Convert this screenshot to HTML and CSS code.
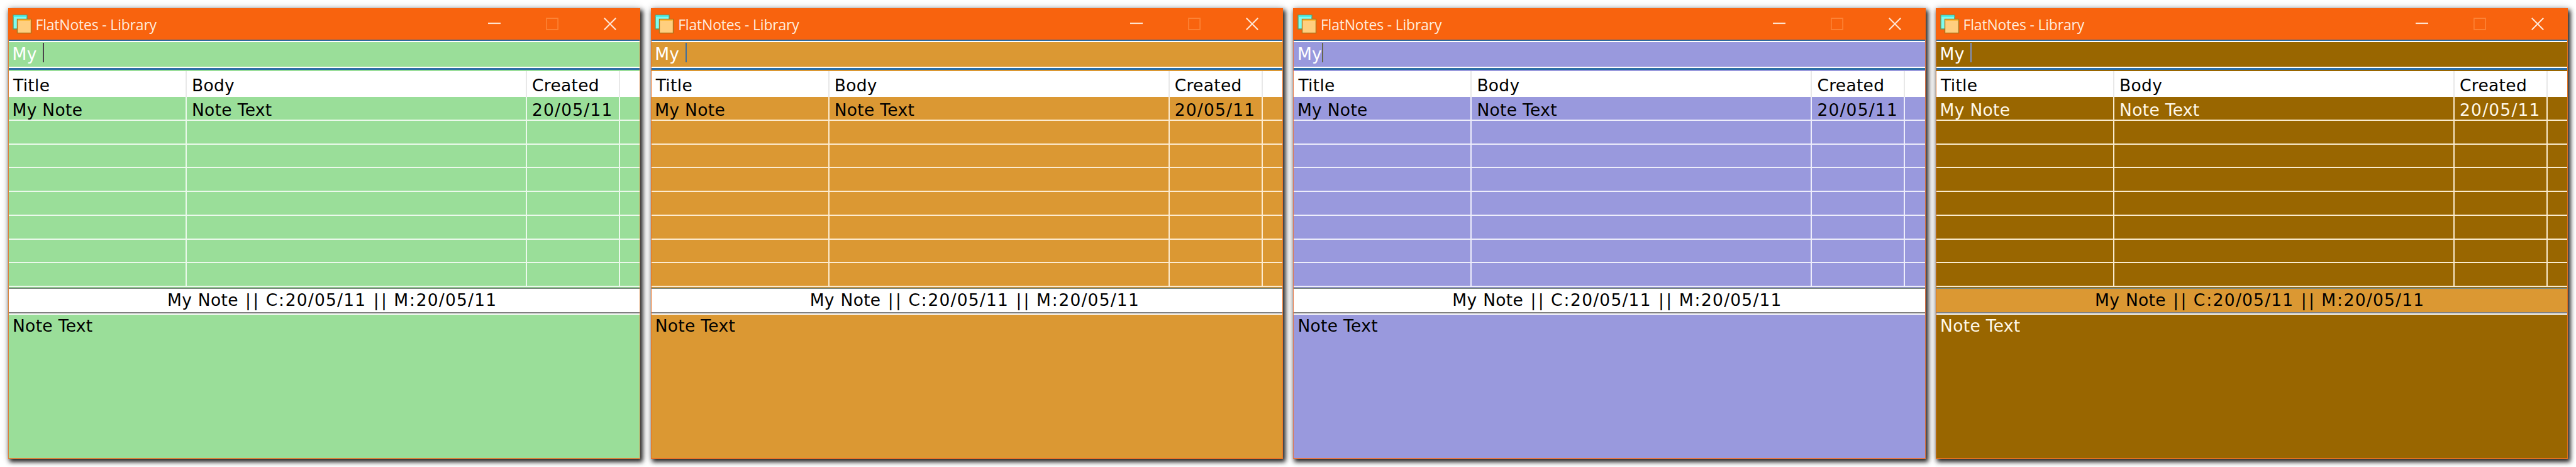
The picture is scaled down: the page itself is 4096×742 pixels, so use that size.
FILE: index.html
```html
<!DOCTYPE html>
<html lang="en">
<head>
<meta charset="utf-8">
<title>FlatNotes - Library</title>
<link rel="stylesheet" href="styles.css">
</head>
<body>
<svg class="defs" width="0" height="0">
  <symbol id="app" viewBox="0 0 31 31">
    <rect x="1" y="1" width="22" height="22" fill="#7ffcf0" stroke="#5e9a62" stroke-width="1.4"/>
    <path d="M1.7 2.5h20.6" stroke="#46e9e6" stroke-width="2.5"/>
    <rect x="7.5" y="7.5" width="22" height="22" fill="#ffcf7f" stroke="#a8741c" stroke-width="1.4"/>
    <path d="M8.2 9h20.6" stroke="#fdbb3c" stroke-width="2"/>
  </symbol>
  <symbol id="min" viewBox="0 0 20 20"><path d="M0 9h20" stroke="#ffe3cf" stroke-width="2.2"/></symbol>
  <symbol id="max" viewBox="0 0 20 20"><path d="M.9 1.1h18.2v17.8H.9z" fill="none" stroke="#fc8437" stroke-width="1.6"/></symbol>
  <symbol id="close" viewBox="0 0 20 20"><path d="M.8.8l18.4 18.4M19.2.8L.8 19.2" stroke="#ffeadb" stroke-width="2"/></symbol>
</svg>
<main class="desk" id="desk"></main>
<template id="tpl">
  <section class="window">
    <header class="titlebar">
      <svg class="app-icon"><use href="#app"/></svg>
      <span class="caption">FlatNotes - Library</span>
      <svg class="control"><use href="#min"/></svg>
      <svg class="control"><use href="#max"/></svg>
      <svg class="control"><use href="#close"/></svg>
    </header>
    <div class="search"><span>My</span><i class="caret"></i></div>
    <div class="rule"></div>
    <div class="row head"><div>Title</div><div>Body</div><div>Created</div><div></div></div>
    <div class="rows">
      <div class="row"><div>My Note</div><div>Note Text</div><div class="date">20/05/11</div><div></div></div>
      <div class="row"><div></div><div></div><div></div><div></div></div>
      <div class="row"><div></div><div></div><div></div><div></div></div>
      <div class="row"><div></div><div></div><div></div><div></div></div>
      <div class="row"><div></div><div></div><div></div><div></div></div>
      <div class="row"><div></div><div></div><div></div><div></div></div>
      <div class="row"><div></div><div></div><div></div><div></div></div>
      <div class="row"><div></div><div></div><div></div><div></div></div>
    </div>
    <div class="status"><span>My Note <b>||</b> C<b>:</b><span class="date">20/05/11</span> <b>||</b> M<b>:</b><span class="date">20/05/11</span></span></div>
    <div class="note">Note Text</div>
  </section>
</template>
<script src="app.js"></script>
</body>
</html>
```

FILE: styles.css
```css
* { box-sizing: border-box; }
body {
  margin: 0;
  background: #fff;
  font: 26.5px "DejaVu Sans", Verdana, sans-serif;
  letter-spacing: .3px;
  color: #000;
}
.defs { display: block; height: 0; }
.desk {
  display: flex;
  gap: 16.4px;
  width: 4096px;
  height: 742px;
  padding: 13px 0 0 13px;
  overflow: hidden;
}
.window {
  flex: none;
  display: flex;
  flex-direction: column;
  width: 1005.3px;
  height: 716px;
  background: var(--bg);
  border: 1px solid var(--edge);
  border-top: 0;
  box-shadow: 3px 4px 7px 1px rgba(0, 0, 0, .85), 0 0 12px rgba(0, 0, 0, .2);
}
.green  { --bg: #9ade99; --edge: #d9823c; --line: #ebf9eb; --caret: #4a444a; --ink: #000; --status: #fff; }
.orange { --bg: #db9833; --edge: #ea7428; --line: #fdebcf; --caret: #3c6ea0; --ink: #000; --status: #fff; }
.violet { --bg: #9999dd; --edge: #e47648; --line: #ededfb; --caret: #66664c; --ink: #000; --status: #fff; }
.brown  { --bg: #996600; --edge: #e0701e; --line: #faebcd; --caret: #7d92c4; --ink: #fff8e8; --status: #db9833; }

.titlebar {
  display: flex;
  align-items: center;
  height: 50px;
  margin: 0 -1px;
  padding: 0 38.5px 0 6.5px;
  background: #f8630e;
}
.app-icon { width: 31px; height: 31px; }
.caption {
  flex: 1;
  margin-left: 6px;
  padding-top: 2px;
  font: 23px/48px "Open Sans", "Noto Sans", sans-serif;
  letter-spacing: -.2px;
  color: #ffecdd;
}
.control { width: 20px; height: 20px; margin-left: 72px; }

.search {
  display: flex;
  height: 48px;
  padding-left: 5.5px;
  border-top: 2px solid #2f6b9e;
  border-bottom: 3px solid #2d6fa6;
  box-shadow: inset 0 2px #fff, inset 0 -2px #fff;
  line-height: 41px;
  color: #fff;
}
.caret { width: 2px; height: 31px; margin: 3px 0 0 9.5px; background: var(--caret); }
.violet .caret { margin-left: 0; }
.rule { height: 2px; background: var(--bg); }

.row { display: grid; grid-template-columns: 283px 541px 148px 1fr; }
.row > div {
  padding: 5px 0 0 8px;
  border-right: 2px solid var(--line);
  line-height: 32px;
}
.row > div:first-child { padding-left: 5.5px; }
.row > div:last-child { border-right: 0; }
.head { height: 41px; background: #fff; }
.head > div { padding-top: 2px; line-height: 41px; border-right: 2px solid #e8e8e8; }
.head > div:first-child { padding-left: 7px; }
.rows {
  display: grid;
  grid-template-rows: repeat(8, 1fr);
  height: 302px;
  color: var(--ink);
}
.rows .row { border-bottom: 2px solid var(--line); min-height: 0; }
.row > .date, .date { letter-spacing: 1.2px; }

.status {
  height: 41px;
  margin-top: 1px;
  padding-left: 25px;
  border-top: 2px solid #78867c;
  border-bottom: 2px solid #808080;
  background: var(--status);
  text-align: center;
  line-height: 35px;
  word-spacing: 1px;
}
.status b { margin: 0 -1.6px 0 1.6px; font-weight: 400; letter-spacing: 3.3px; }
.note {
  flex: 1;
  padding-left: 6px;
  border-top: 2px solid #fff;
  line-height: 36px;
  color: var(--ink);
}
```

FILE: app.js
```js
// One window per colour theme.
const desk = document.getElementById('desk');
const tpl = document.getElementById('tpl');
for (const theme of ['green', 'orange', 'violet', 'brown']) {
  const win = tpl.content.firstElementChild.cloneNode(true);
  win.classList.add(theme);
  desk.append(win);
}
```
